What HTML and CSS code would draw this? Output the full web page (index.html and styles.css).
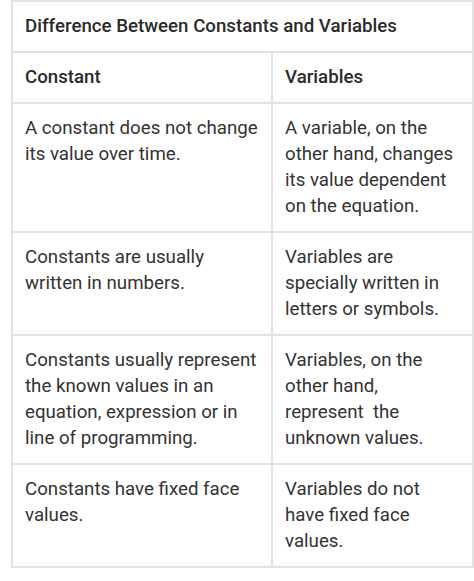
FILE: index.html
```html
<!DOCTYPE html>
<html lang="en">
<head>
<meta charset="utf-8">
<title>Difference Between Constants and Variables</title>
<link rel="stylesheet" href="styles.css">
</head>
<body>
<table class="compare">
  <colgroup>
    <col class="col-left">
    <col class="col-right">
  </colgroup>
  <thead>
    <tr><th class="title" colspan="2">Difference Between Constants and Variables</th></tr>
    <tr><th>Constant</th><th class="right">Variables</th></tr>
  </thead>
  <tbody>
    <tr>
      <td>A constant does not change its value over time.</td>
      <td class="right">A variable, on the other hand, changes its value dependent on the equation.</td>
    </tr>
    <tr>
      <td>Constants are usually written in numbers.</td>
      <td class="right">Variables are specially written in letters or symbols.</td>
    </tr>
    <tr>
      <td>Constants usually represent the known values in an equation, expression or in line of programming.</td>
      <td class="right">Variables, on the other hand, represent&nbsp; the unknown values.</td>
    </tr>
    <tr>
      <td>Constants have fixed face values.</td>
      <td class="right">Variables do not have fixed face values.</td>
    </tr>
  </tbody>
</table>
</body>
</html>
```
FILE: styles.css
```css
html, body {
  margin: 0;
  padding: 0;
  background: #ffffff;
}

body {
  font-family: Roboto, "Liberation Sans", Arial, sans-serif;
  color: #333333;
}

.compare {
  border-collapse: collapse;
  margin-left: 11px;
  margin-top: 0;
  width: 463px;
  table-layout: fixed;
  font-size: 18.7px;
  line-height: 26px;
}

.col-left {
  width: 260px;
}

.compare th,
.compare td {
  border: 2px solid #e2e2e2;
  padding: 11px 6px 12px 12px;
  text-align: left;
  vertical-align: top;
}

.compare .right {
  padding-right: 14px;
}

.compare th {
  font-weight: 500;
  color: #2a2a2a;
}
```
